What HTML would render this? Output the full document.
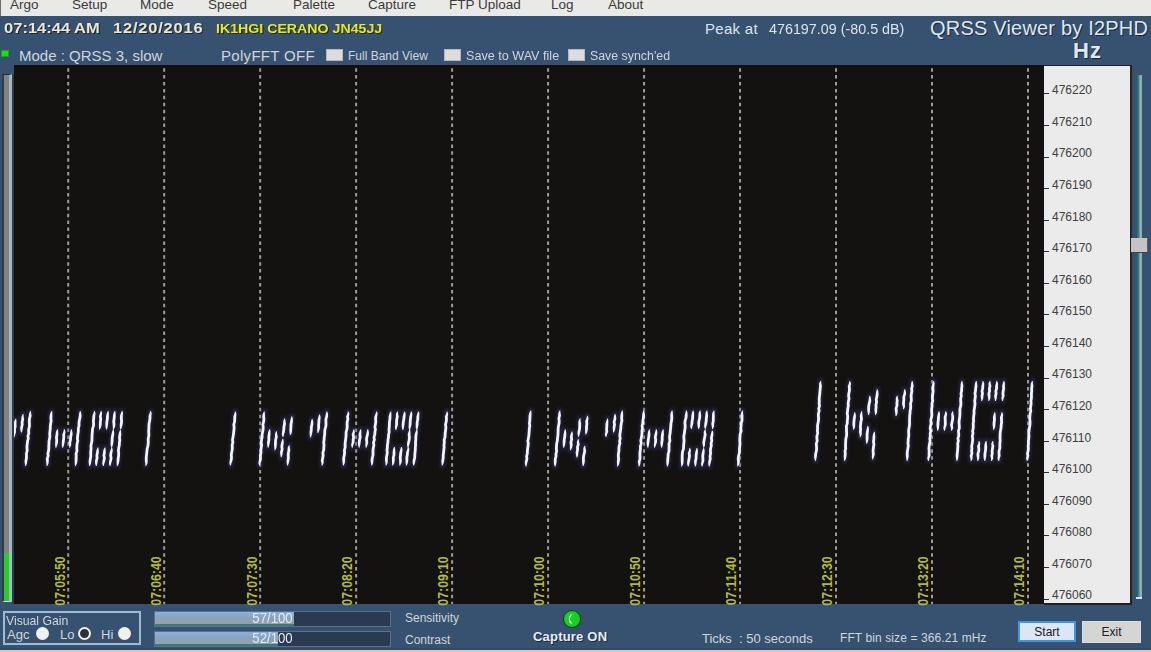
<!DOCTYPE html><html><head><meta charset="utf-8"><style>
*{margin:0;padding:0;box-sizing:border-box}
html,body{width:1151px;height:652px;overflow:hidden;background:#365270;font-family:"Liberation Sans",sans-serif}
.a{position:absolute;white-space:nowrap}
#menu{position:absolute;left:0;top:0;width:1151px;height:16px;background:#e9e9e8;border-left:1px solid #707070}
#menu span{position:absolute;top:-3px;font-size:13.5px;color:#3a3a3a;line-height:16px}
.tl{position:absolute;top:574px;width:60px;height:14px;line-height:14px;font-size:14px;font-weight:bold;color:#b4bc34;transform:rotate(-90deg) scaleX(0.88);transform-origin:center;text-align:center}
.tk{position:absolute;left:1043.5px;width:5.5px;height:1px;background:#303030}
.fq{position:absolute;left:1052px;font-size:12px;line-height:16px;color:#404040}
.cb{position:absolute;top:49px;width:17px;height:12px;background:#dcdcdc;border:1px solid #b8b8b8}
.wt{color:#e6e6e6}
</style></head><body>
<div id="menu">
<span style="left:9px">Argo</span><span style="left:71px">Setup</span><span style="left:139px">Mode</span><span style="left:207px">Speed</span><span style="left:292px">Palette</span><span style="left:367px">Capture</span><span style="left:448px">FTP Upload</span><span style="left:550px">Log</span><span style="left:607px">About</span>
</div>
<div class="a" style="left:4px;top:20px;font-size:14px;font-weight:bold;color:#ece6cc;text-shadow:1px 1px 0 #1c2838;transform:scaleX(1.18);transform-origin:left">07:14:44 AM</div>
<div class="a" style="left:113px;top:20px;font-size:14px;font-weight:bold;color:#ece6cc;text-shadow:1px 1px 0 #1c2838;letter-spacing:0.65px;transform:scaleX(1.18);transform-origin:left">12/20/2016</div>
<div class="a" style="left:216px;top:21px;font-size:13px;font-weight:bold;color:#e4ea22;text-shadow:1px 1px 0 #2a2a10;transform:scaleX(1.09);transform-origin:left">IK1HGI CERANO JN45JJ</div>
<div class="a wt" style="left:705px;top:19.5px;font-size:15px;color:#dde4ec;letter-spacing:0.3px">Peak at</div>
<div class="a wt" style="left:769px;top:19.5px;font-size:15px;color:#dde4ec;transform:scaleX(0.955);transform-origin:left">476197.09 (-80.5 dB)</div>
<div class="a" style="left:930px;top:17px;font-size:20px;letter-spacing:0.2px;color:#dfe8f0;text-shadow:1px 1px 0 #1c2838">QRSS Viewer by I2PHD</div>
<div class="a" style="left:1073px;top:38px;font-size:22px;font-weight:bold;letter-spacing:1px;color:#dfe8f0;text-shadow:1px 1px 0 #1c2838">Hz</div>
<div class="a" style="left:1px;top:50px;width:8px;height:7px;background:#18e018;border:1px solid #20a020"></div>
<div class="a wt" style="left:19px;top:47px;font-size:15px;color:#d0d5dc">Mode : QRSS 3, slow</div>
<div class="a wt" style="left:221px;top:47px;font-size:15px;color:#d0d5dc;letter-spacing:0.3px">PolyFFT OFF</div>
<div class="cb" style="left:326px"></div><div class="a wt" style="left:348px;top:48.5px;font-size:12px;color:#d0d5dc">Full Band View</div>
<div class="cb" style="left:444px"></div><div class="a wt" style="left:466px;top:48.5px;font-size:12px;color:#d0d5dc;transform:scaleX(1.05);transform-origin:left">Save to WAV file</div>
<div class="cb" style="left:568px"></div><div class="a wt" style="left:590px;top:48.5px;font-size:12px;color:#d0d5dc;transform:scaleX(1.03);transform-origin:left">Save synch'ed</div>

<!-- level meter -->
<div class="a" style="left:2px;top:74px;width:10px;height:528px;background:#85837f;border-top:1px solid #202830;border-left:2px solid #2e3e4c;border-right:3px solid #a4b8c6;border-bottom:1px solid #c8dce8"></div><div class="a" style="left:12px;top:74px;width:2px;height:530px;background:#2c3c4c"></div>
<div class="a" style="left:4px;top:553px;width:5px;height:48px;background:#1ed41e"></div>

<!-- waterfall -->
<div class="a" style="left:14px;top:65px;width:1030px;height:539px;background:#131211"></div>
<svg class="a" style="left:0;top:0" width="1151" height="652">
<defs><filter id="bl" x="-50%" y="-10%" width="200%" height="120%"><feGaussianBlur stdDeviation="1.6"/></filter><clipPath id="wc"><rect x="14" y="65" width="1030" height="539"/></clipPath></defs>
<g clip-path="url(#wc)">
<g stroke="#9c9c9c" stroke-dasharray="3.5 3.43" stroke-width="2"><line x1="68.20" y1="61.22" x2="68.20" y2="610"/><line x1="164.18" y1="61.22" x2="164.18" y2="610"/><line x1="260.16" y1="61.22" x2="260.16" y2="610"/><line x1="356.14" y1="61.22" x2="356.14" y2="610"/><line x1="452.12" y1="61.22" x2="452.12" y2="610"/><line x1="548.10" y1="61.22" x2="548.10" y2="610"/><line x1="644.08" y1="61.22" x2="644.08" y2="610"/><line x1="740.06" y1="61.22" x2="740.06" y2="610"/><line x1="836.04" y1="61.22" x2="836.04" y2="610"/><line x1="932.02" y1="61.22" x2="932.02" y2="610"/><line x1="1028.00" y1="61.22" x2="1028.00" y2="610"/></g>
<g fill="none" stroke="#4a4690" stroke-width="5" stroke-linecap="round" filter="url(#bl)" opacity="0.4"><polyline points="15.7,418.7 15.4,421.3 15.0,424.0 15.2,426.6 14.5,429.3 14.6,431.9 14.2,434.6 14.1,437.2"/><polyline points="23.1,414.1 22.6,416.8 22.7,419.4 22.1,422.1 22.2,424.7 21.6,427.4 21.4,430.0 21.5,432.6"/><polyline points="30.4,411.0 30.1,413.5 30.2,416.0 29.5,418.5 29.3,421.0 29.4,423.5 29.5,426.0 28.9,428.5 28.6,431.0 28.8,433.5 27.9,436.0 28.3,438.5 27.6,441.0 27.3,443.5 27.0,446.0 27.0,448.5 27.2,451.0 26.4,453.5 26.5,456.0 26.4,458.5 25.9,461.0 25.8,463.5 25.6,466.0"/><polyline points="51.8,411.0 51.2,413.5 51.0,416.0 50.9,418.5 51.1,421.0 50.7,423.5 50.3,426.0 50.3,428.5 50.0,431.0 49.7,433.5 49.9,436.0 49.6,438.5 49.0,441.0 49.0,443.5 48.8,446.0 48.8,448.5 48.5,451.0 47.9,453.5 48.2,456.0 47.3,458.5 47.4,461.0 47.4,463.5 47.0,466.0"/><polyline points="57.5,429.2 57.0,431.9 57.0,434.5 56.4,437.2 56.7,439.8 56.6,442.5 56.2,445.1 55.9,447.8"/><polyline points="64.3,429.2 64.4,431.9 63.7,434.5 63.8,437.2 63.5,439.8 63.2,442.5 62.9,445.1 62.7,447.8"/><polyline points="71.3,429.2 71.4,431.9 71.2,434.5 70.6,437.2 70.5,439.8 69.8,442.5 70.1,445.1 69.7,447.8"/><polyline points="80.2,411.0 80.1,413.5 80.2,416.0 79.8,418.5 79.2,421.0 79.0,423.5 79.0,426.0 78.3,428.5 78.4,431.0 78.0,433.5 77.7,436.0 77.4,438.5 77.8,441.0 77.1,443.5 76.9,446.0 76.8,448.5 77.0,451.0 76.1,453.5 76.2,456.0 76.1,458.5 76.1,461.0 75.9,463.5 75.4,466.0"/><polyline points="94.4,411.0 94.5,413.5 93.8,416.0 93.7,418.5 93.4,421.0 93.6,423.5 93.5,426.0 92.6,428.5 92.4,431.0 92.2,433.5 92.0,436.0 92.0,438.5 91.9,441.0 91.4,443.5 90.9,446.0 91.1,448.5 90.8,451.0 90.7,453.5 90.8,456.0 90.4,458.5 90.0,461.0 89.9,463.5 89.6,466.0"/><polyline points="101.1,411.0 101.0,413.6 100.3,416.3 100.7,418.9 100.4,421.6 100.3,424.2 100.0,426.9 99.5,429.5"/><polyline points="97.9,447.5 97.6,450.1 97.4,452.8 96.9,455.4 97.1,458.1 96.4,460.7 96.2,463.4 96.3,466.0"/><polyline points="108.2,411.0 107.7,413.6 107.5,416.3 107.4,418.9 106.9,421.6 106.7,424.2 106.5,426.9 106.6,429.5"/><polyline points="105.0,447.5 104.5,450.1 104.4,452.8 103.9,455.4 104.4,458.1 103.9,460.7 103.3,463.4 103.4,466.0"/><polyline points="114.9,411.0 114.5,413.6 114.3,416.3 114.1,418.9 113.7,421.6 114.0,424.2 113.9,426.9 113.3,429.5"/><polyline points="113.3,429.2 113.1,431.9 112.8,434.5 112.3,437.2 112.1,439.8 112.0,442.5 111.7,445.1 111.7,447.8"/><polyline points="111.7,447.5 111.7,450.1 111.0,452.8 110.6,455.4 111.1,458.1 110.6,460.7 110.0,463.4 110.1,466.0"/><polyline points="122.1,411.0 121.9,413.6 121.3,416.3 121.4,418.9 121.6,421.6 121.2,424.2 120.9,426.9 120.5,429.5"/><polyline points="120.5,429.9 120.0,432.5 119.9,435.0 119.5,437.6 119.8,440.2 119.4,442.8 119.3,445.4 118.7,447.9 118.4,450.5 118.7,453.1 118.6,455.7 118.2,458.3 118.0,460.8 117.8,463.4 117.3,466.0"/><polyline points="150.6,411.0 150.6,413.5 150.0,416.0 150.0,418.5 149.6,421.0 149.1,423.5 148.9,426.0 148.9,428.5 148.7,431.0 148.8,433.5 148.8,436.0 148.2,438.5 148.3,441.0 148.2,443.5 147.9,446.0 147.2,448.5 146.9,451.0 146.7,453.5 146.4,456.0 146.2,458.5 146.3,461.0 146.3,463.5 145.8,466.0"/><polyline points="235.3,411.5 235.4,414.1 234.8,416.6 234.7,419.2 234.6,421.8 233.8,424.4 234.1,426.9 234.0,429.5 233.7,432.1 233.4,434.6 233.0,437.2 232.5,439.8 232.8,442.4 232.2,444.9 232.3,447.5 232.2,450.1 231.6,452.6 231.3,455.2 231.5,457.8 231.1,460.4 230.5,462.9 230.5,465.5"/><polyline points="264.3,411.5 263.8,414.1 263.6,416.6 263.9,419.2 263.6,421.8 262.9,424.4 263.2,426.9 263.1,429.5 262.6,432.1 262.1,434.6 262.1,437.2 261.5,439.8 261.2,442.4 261.7,444.9 261.2,447.5 260.9,450.1 261.0,452.6 260.4,455.2 260.5,457.8 260.2,460.4 259.5,462.9 259.5,465.5"/><polyline points="269.7,429.2 269.3,431.9 269.1,434.5 268.8,437.2 268.9,439.8 268.4,442.5 268.2,445.1 268.1,447.8"/><polyline points="276.5,431.3 276.0,434.0 276.4,436.7 275.7,439.4 275.5,442.1 275.4,444.8 275.4,447.5 274.9,450.2"/><polyline points="284.7,418.6 284.4,421.3 284.5,423.9 284.0,426.5 283.8,429.2 283.5,431.8 282.9,434.5 283.0,437.1"/><polyline points="282.9,438.8 282.6,441.4 282.2,444.1 281.8,446.7 282.2,449.3 281.4,452.0 281.4,454.6 281.2,457.3"/><polyline points="291.9,416.2 291.8,418.9 291.5,421.6 291.0,424.3 290.9,427.0 290.7,429.7 290.7,432.4 290.2,435.1"/><polyline points="289.3,445.2 288.8,447.7 288.9,450.3 288.4,452.8 288.2,455.3 288.4,457.8 288.0,460.3 287.8,462.9 287.5,465.4"/><polyline points="312.2,418.9 312.1,421.5 312.0,424.2 311.4,426.8 311.3,429.5 311.0,432.1 310.7,434.7 310.5,437.4"/><polyline points="319.6,414.4 319.5,417.1 319.0,419.7 318.9,422.3 318.6,425.0 318.7,427.6 318.3,430.3 317.9,432.9"/><polyline points="326.8,411.5 326.9,414.1 326.7,416.6 325.9,419.2 325.9,421.8 326.0,424.4 325.7,426.9 324.9,429.5 324.7,432.1 324.7,434.6 324.2,437.2 324.1,439.8 323.7,442.4 324.0,444.9 323.8,447.5 323.7,450.1 322.9,452.6 323.1,455.2 322.8,457.8 322.2,460.4 322.5,462.9 322.0,465.5"/><polyline points="348.2,411.5 348.4,414.1 347.5,416.6 347.9,419.2 347.2,421.8 347.1,424.4 347.2,426.9 346.9,429.5 346.1,432.1 346.1,434.6 345.9,437.2 345.6,439.8 345.2,442.4 345.1,444.9 345.2,447.5 344.4,450.1 344.6,452.6 344.3,455.2 343.7,457.8 343.7,460.4 343.7,462.9 343.4,465.5"/><polyline points="353.9,429.2 353.7,431.9 353.1,434.5 353.6,437.2 353.2,439.8 353.1,442.5 352.2,445.1 352.3,447.8"/><polyline points="360.7,429.2 360.3,431.9 359.9,434.5 360.2,437.2 359.6,439.8 359.2,442.5 359.2,445.1 359.1,447.8"/><polyline points="367.7,429.2 367.8,431.9 367.5,434.5 366.8,437.2 366.5,439.8 366.9,442.5 366.4,445.1 366.1,447.8"/><polyline points="376.6,411.5 376.5,414.1 375.8,416.6 375.6,419.2 375.8,421.8 375.4,424.4 374.9,426.9 375.4,429.5 374.9,432.1 374.8,434.6 374.0,437.2 374.4,439.8 373.5,442.4 373.9,444.9 373.4,447.5 373.0,450.1 373.0,452.6 373.0,455.2 372.3,457.8 372.0,460.4 372.0,462.9 371.8,465.5"/><polyline points="390.8,411.5 390.4,414.1 390.0,416.6 389.9,419.2 389.5,421.8 389.4,424.4 389.3,426.9 389.0,429.5 389.2,432.1 388.6,434.6 388.5,437.2 388.0,439.8 387.9,442.4 387.4,444.9 387.4,447.5 387.0,450.1 387.3,452.6 386.9,455.2 386.4,457.8 386.4,460.4 386.6,462.9 386.0,465.5"/><polyline points="397.5,411.5 397.0,414.1 397.3,416.8 396.7,419.4 396.6,422.1 396.6,424.7 396.0,427.4 395.9,430.0"/><polyline points="394.3,447.0 394.1,449.6 394.0,452.3 394.0,454.9 393.3,457.6 393.4,460.2 393.1,462.9 392.7,465.5"/><polyline points="404.6,411.5 404.5,414.1 404.1,416.8 403.8,419.4 403.3,422.1 403.1,424.7 402.9,427.4 403.0,430.0"/><polyline points="401.4,447.0 401.4,449.6 400.8,452.3 400.5,454.9 400.2,457.6 400.5,460.2 400.3,462.9 399.8,465.5"/><polyline points="411.3,411.5 411.2,414.1 410.7,416.8 410.4,419.4 410.2,422.1 410.1,424.7 409.6,427.4 409.7,430.0"/><polyline points="409.7,429.2 409.4,431.9 409.1,434.5 409.4,437.2 409.2,439.8 408.6,442.5 408.1,445.1 408.1,447.8"/><polyline points="408.1,447.0 408.3,449.6 407.5,452.3 407.3,454.9 406.8,457.6 406.9,460.2 406.7,462.9 406.5,465.5"/><polyline points="418.5,411.5 418.3,414.1 417.8,416.8 417.8,419.4 417.2,422.1 417.1,424.7 416.8,427.4 416.9,430.0"/><polyline points="416.9,429.4 416.6,432.0 416.1,434.5 415.8,437.1 415.8,439.7 415.5,442.3 415.6,444.9 415.3,447.4 415.3,450.0 415.0,452.6 414.8,455.2 414.7,457.8 414.1,460.3 413.8,462.9 413.7,465.5"/><polyline points="447.0,411.5 447.2,414.1 446.3,416.6 446.5,419.2 446.2,421.8 445.5,424.4 445.9,426.9 445.7,429.5 445.3,432.1 445.1,434.6 445.0,437.2 444.2,439.8 444.3,442.4 444.0,444.9 444.1,447.5 443.8,450.1 443.6,452.6 443.2,455.2 443.2,457.8 442.8,460.4 442.6,462.9 442.2,465.5"/><polyline points="530.8,410.5 530.4,413.0 530.0,415.6 529.9,418.1 529.8,420.7 529.4,423.2 529.8,425.8 529.4,428.3 529.2,430.9 529.0,433.4 528.8,436.0 528.4,438.5 527.8,441.0 528.3,443.6 528.0,446.1 527.6,448.7 527.4,451.2 527.3,453.8 526.6,456.3 526.9,458.9 526.3,461.4 526.0,464.0 526.1,466.5"/><polyline points="559.8,410.5 559.4,413.0 559.6,415.6 558.9,418.1 559.1,420.7 559.1,423.2 558.5,425.8 558.2,428.3 558.1,430.9 558.0,433.4 557.9,436.0 557.5,438.5 557.3,441.0 556.7,443.6 556.5,446.1 556.4,448.7 556.6,451.2 556.0,453.8 556.0,456.3 555.3,458.9 555.2,461.4 555.1,464.0 555.1,466.5"/><polyline points="565.2,429.2 565.1,431.9 564.9,434.5 564.7,437.2 564.2,439.8 564.1,442.5 563.9,445.1 563.7,447.8"/><polyline points="572.1,431.4 571.8,434.1 571.3,436.8 571.7,439.5 570.9,442.2 571.3,444.9 571.0,447.6 570.5,450.3"/><polyline points="580.2,418.2 579.6,420.9 579.7,423.5 579.7,426.2 579.6,428.8 579.0,431.4 578.6,434.1 578.6,436.7"/><polyline points="578.4,439.1 577.9,441.8 578.3,444.4 577.5,447.0 577.6,449.7 577.0,452.3 577.1,455.0 576.8,457.6"/><polyline points="587.4,415.7 587.5,418.4 586.6,421.1 586.9,423.8 586.5,426.5 586.5,429.2 586.2,431.9 585.8,434.6"/><polyline points="584.8,445.8 584.4,448.3 584.7,450.9 584.2,453.4 583.6,455.9 583.4,458.4 583.5,460.9 583.3,463.5 583.1,466.0"/><polyline points="607.6,418.5 607.3,421.2 606.9,423.8 606.8,426.4 606.6,429.1 606.8,431.7 605.9,434.4 606.1,437.0"/><polyline points="615.0,413.9 615.0,416.5 614.9,419.2 614.1,421.8 614.5,424.5 614.1,427.1 614.0,429.7 613.5,432.4"/><polyline points="622.3,410.5 621.9,413.0 621.8,415.6 621.6,418.1 621.9,420.7 621.3,423.2 620.9,425.8 620.8,428.3 620.4,430.9 620.0,433.4 619.8,436.0 620.2,438.5 619.6,441.0 619.9,443.6 619.1,446.1 618.9,448.7 618.9,451.2 618.4,453.8 618.3,456.3 618.6,458.9 618.3,461.4 618.0,464.0 617.6,466.5"/><polyline points="643.7,410.5 643.6,413.0 643.6,415.6 643.4,418.1 642.9,420.7 642.8,423.2 642.1,425.8 642.4,428.3 642.0,430.9 642.0,433.4 641.7,436.0 641.2,438.5 640.8,441.0 641.3,443.6 640.4,446.1 640.5,448.7 640.1,451.2 639.9,453.8 640.0,456.3 640.0,458.9 639.2,461.4 639.3,464.0 639.0,466.5"/><polyline points="649.4,429.2 649.0,431.9 649.0,434.5 648.7,437.2 648.3,439.8 648.0,442.5 647.9,445.1 647.9,447.8"/><polyline points="656.2,429.2 656.3,431.9 655.8,434.5 655.3,437.2 655.7,439.8 655.5,442.5 654.9,445.1 654.7,447.8"/><polyline points="663.2,429.2 662.7,431.9 662.5,434.5 662.2,437.2 662.2,439.8 661.8,442.5 661.7,445.1 661.7,447.8"/><polyline points="672.1,410.5 671.7,413.0 671.7,415.6 671.8,418.1 671.5,420.7 671.0,423.2 670.8,425.8 670.6,428.3 670.3,430.9 670.1,433.4 669.6,436.0 669.6,438.5 669.9,441.0 669.0,443.6 669.1,446.1 669.0,448.7 669.0,451.2 668.2,453.8 668.1,456.3 667.8,458.9 667.7,461.4 667.6,464.0 667.4,466.5"/><polyline points="686.3,410.5 686.5,413.0 686.2,415.6 686.0,418.1 685.1,420.7 684.9,423.2 685.2,425.8 685.1,428.3 684.6,430.9 684.4,433.4 683.8,436.0 683.9,438.5 684.1,441.0 683.8,443.6 683.6,446.1 683.5,448.7 682.7,451.2 682.3,453.8 682.2,456.3 682.2,458.9 682.2,461.4 682.2,464.0 681.6,466.5"/><polyline points="693.0,410.5 693.0,413.1 692.7,415.8 692.6,418.4 692.1,421.1 691.9,423.7 691.3,426.4 691.5,429.0"/><polyline points="689.8,448.0 689.8,450.6 689.2,453.3 689.5,455.9 689.1,458.6 688.6,461.2 688.2,463.9 688.3,466.5"/><polyline points="700.1,410.5 699.7,413.1 699.8,415.8 699.6,418.4 698.9,421.1 698.7,423.7 698.8,426.4 698.6,429.0"/><polyline points="696.9,448.0 696.8,450.6 696.4,453.3 696.1,455.9 696.1,458.6 695.4,461.2 695.4,463.9 695.4,466.5"/><polyline points="706.8,410.5 706.6,413.1 706.7,415.8 706.3,418.4 706.2,421.1 705.7,423.7 705.3,426.4 705.3,429.0"/><polyline points="705.2,429.2 704.8,431.9 705.2,434.5 704.7,437.2 704.2,439.8 703.7,442.5 703.9,445.1 703.7,447.8"/><polyline points="703.6,448.0 703.6,450.6 703.1,453.3 702.8,455.9 702.9,458.6 702.9,461.2 702.1,463.9 702.1,466.5"/><polyline points="714.0,410.5 713.4,413.1 713.4,415.8 713.3,418.4 713.3,421.1 712.7,423.7 712.9,426.4 712.5,429.0"/><polyline points="712.3,430.4 712.3,433.0 711.9,435.5 711.4,438.1 711.8,440.7 711.1,443.3 711.3,445.9 710.6,448.4 710.4,451.0 710.6,453.6 710.0,456.2 710.3,458.8 709.7,461.3 709.3,463.9 709.3,466.5"/><polyline points="742.5,410.5 742.1,413.0 742.0,415.6 742.0,418.1 742.0,420.7 741.2,423.2 741.1,425.8 740.8,428.3 741.2,430.9 740.3,433.4 740.0,436.0 739.8,438.5 739.8,441.0 740.0,443.6 739.8,446.1 739.5,448.7 739.5,451.2 739.2,453.8 738.5,456.3 738.2,458.9 738.6,461.4 738.2,464.0 737.8,466.5"/><polyline points="820.7,381.0 820.2,383.5 820.5,386.0 820.2,388.5 820.0,391.0 819.8,393.5 819.5,396.0 819.2,398.5 819.3,401.0 819.2,403.5 819.5,406.0 818.7,408.5 819.2,411.0 818.4,413.5 818.4,416.0 818.6,418.5 818.4,421.0 817.9,423.5 817.5,426.0 817.6,428.5 817.4,431.0 817.7,433.5 816.9,436.0 816.9,438.5 817.2,441.0 816.3,443.5 816.5,446.0 816.6,448.5 816.4,451.0 815.7,453.5 815.5,456.0 815.4,458.5 815.6,461.0"/><polyline points="849.7,381.0 849.9,383.5 849.2,386.0 849.4,388.5 849.4,391.0 848.8,393.5 848.6,396.0 849.0,398.5 848.5,401.0 848.1,403.5 848.3,406.0 847.8,408.5 847.6,411.0 847.2,413.5 847.7,416.0 847.6,418.5 847.3,421.0 847.3,423.5 846.4,426.0 846.5,428.5 846.5,431.0 846.7,433.5 846.5,436.0 845.9,438.5 845.7,441.0 845.6,443.5 845.5,446.0 845.7,448.5 845.0,451.0 845.3,453.5 845.1,456.0 845.0,458.5 844.6,461.0"/><polyline points="854.7,412.2 854.8,414.7 854.5,417.2 854.1,419.7 853.9,422.3 853.8,424.8 854.0,427.3 853.6,429.8"/><polyline points="861.8,411.3 861.3,413.9 861.2,416.5 861.5,419.1 860.9,421.7 860.6,424.3 860.4,426.9 860.6,429.5 860.3,432.0 860.7,434.6 860.1,437.2"/><polyline points="869.8,395.8 869.9,398.5 869.8,401.3 869.1,404.0 868.7,406.8 868.6,409.6 868.7,412.3 868.5,415.1"/><polyline points="867.8,426.1 867.8,428.6 867.5,431.2 867.1,433.7 867.1,436.2 867.1,438.7 867.0,441.3 866.7,443.8"/><polyline points="877.2,389.2 877.2,391.8 877.1,394.4 876.8,397.0 876.2,399.6 876.6,402.1 876.0,404.7 876.1,407.3 875.8,409.9 875.9,412.5 875.5,415.1"/><polyline points="874.4,431.8 874.0,434.3 873.9,436.8 873.8,439.3 873.5,441.8 873.9,444.3 873.5,446.9 873.2,449.4 873.1,451.9 873.4,454.4 872.8,456.9 872.7,459.4"/><polyline points="897.3,395.8 896.9,398.3 897.2,400.8 896.9,403.3 897.0,405.8 896.1,408.3 896.3,410.9 896.4,413.4 896.0,415.9"/><polyline points="904.7,389.2 904.8,391.7 904.7,394.2 903.8,396.8 903.9,399.3 903.6,401.8 903.5,404.3 903.9,406.8 903.4,409.3"/><polyline points="912.2,381.0 912.1,383.5 912.3,386.0 911.6,388.5 911.9,391.0 911.4,393.5 911.1,396.0 911.3,398.5 911.3,401.0 910.5,403.5 910.7,406.0 910.6,408.5 910.1,411.0 910.0,413.5 909.7,416.0 909.6,418.5 909.5,421.0 909.6,423.5 909.4,426.0 908.9,428.5 908.6,431.0 908.7,433.5 908.8,436.0 908.3,438.5 908.2,441.0 908.0,443.5 908.3,446.0 907.9,448.5 907.4,451.0 907.2,453.5 907.3,456.0 907.3,458.5 907.1,461.0"/><polyline points="933.6,381.0 933.6,383.5 933.0,386.0 932.9,388.5 933.1,391.0 932.8,393.5 932.5,396.0 932.4,398.5 932.7,401.0 932.0,403.5 932.1,406.0 931.7,408.5 931.6,411.0 931.8,413.5 931.8,416.0 931.1,418.5 930.8,421.0 931.1,423.5 930.5,426.0 930.2,428.5 930.7,431.0 930.2,433.5 930.3,436.0 929.8,438.5 930.1,441.0 929.6,443.5 929.2,446.0 928.9,448.5 929.2,451.0 929.1,453.5 929.1,456.0 928.3,458.5 928.5,461.0"/><polyline points="939.0,411.3 938.9,414.1 938.5,416.9 938.4,419.6 938.0,422.4 937.9,425.1 937.9,427.9 937.7,430.7"/><polyline points="945.8,411.3 945.9,414.1 945.1,416.9 945.2,419.6 945.3,422.4 945.3,425.1 944.5,427.9 944.5,430.7"/><polyline points="952.8,411.3 952.3,414.1 952.8,416.9 952.6,419.6 952.0,422.4 951.5,425.1 952.0,427.9 951.5,430.7"/><polyline points="962.0,381.0 961.8,383.5 962.0,386.0 961.6,388.5 961.6,391.0 961.0,393.5 961.3,396.0 960.7,398.5 960.7,401.0 960.9,403.5 960.7,406.0 960.0,408.5 959.9,411.0 959.9,413.5 959.8,416.0 959.5,418.5 959.1,421.0 959.1,423.5 959.3,426.0 959.3,428.5 958.4,431.0 958.7,433.5 958.7,436.0 957.9,438.5 958.4,441.0 957.7,443.5 957.9,446.0 957.7,448.5 957.6,451.0 957.2,453.5 957.1,456.0 957.1,458.5 956.9,461.0"/><polyline points="976.2,381.0 976.0,383.5 976.0,386.0 975.7,388.5 975.5,391.0 975.0,393.5 975.4,396.0 975.1,398.5 974.7,401.0 975.0,403.5 974.8,406.0 974.4,408.5 974.0,411.0 974.1,413.5 973.7,416.0 973.5,418.5 973.6,421.0 973.2,423.5 973.3,426.0 973.2,428.5 972.6,431.0 973.0,433.5 972.3,436.0 972.7,438.5 972.6,441.0 972.2,443.5 971.7,446.0 971.9,448.5 971.6,451.0 971.9,453.5 971.1,456.0 971.5,458.5 971.1,461.0"/><polyline points="982.9,381.0 983.2,383.5 982.8,386.0 982.7,388.6 982.0,391.1 982.5,393.6 982.0,396.1 982.2,398.6 981.6,401.1"/><polyline points="979.1,440.9 979.2,443.4 978.5,445.9 978.8,448.4 978.8,450.9 977.9,453.4 978.0,456.0 978.1,458.5 977.8,461.0"/><polyline points="990.0,381.0 989.6,383.5 990.0,386.0 989.4,388.6 989.6,391.1 988.9,393.6 989.1,396.1 989.2,398.6 988.7,401.1"/><polyline points="986.2,440.9 985.8,443.4 985.7,445.9 985.7,448.4 985.4,450.9 985.0,453.4 984.9,456.0 984.8,458.5 984.9,461.0"/><polyline points="996.7,381.0 996.9,383.5 996.6,386.0 996.6,388.6 995.8,391.1 996.1,393.6 995.5,396.1 995.6,398.6 995.4,401.1"/><polyline points="994.7,412.2 994.7,414.7 994.3,417.2 994.5,419.7 994.1,422.3 994.0,424.8 994.0,427.3 993.6,429.8"/><polyline points="992.9,440.9 992.4,443.4 992.9,445.9 992.5,448.4 992.1,450.9 992.3,453.4 991.7,456.0 992.1,458.5 991.6,461.0"/><polyline points="1003.9,381.0 1003.8,383.5 1003.5,386.0 1003.7,388.6 1003.2,391.1 1002.9,393.6 1003.2,396.1 1002.4,398.6 1002.6,401.1"/><polyline points="1001.9,412.2 1002.0,414.7 1001.4,417.3 1001.5,419.9 1001.6,422.4 1001.2,425.0 1001.1,427.6 1000.6,430.2 1000.2,432.7 1000.1,435.3 1000.0,437.9 1000.2,440.4 999.9,443.0 999.8,445.6 999.9,448.1 999.1,450.7 999.0,453.3 999.2,455.9 998.5,458.4 998.8,461.0"/><polyline points="1032.4,381.0 1031.9,383.5 1032.0,386.0 1031.6,388.5 1031.7,391.0 1031.4,393.5 1031.5,396.0 1031.4,398.5 1030.9,401.0 1031.1,403.5 1030.8,406.0 1030.4,408.5 1030.8,411.0 1030.1,413.5 1029.9,416.0 1029.7,418.5 1030.0,421.0 1030.0,423.5 1029.8,426.0 1029.3,428.5 1029.0,431.0 1028.7,433.5 1029.0,436.0 1028.8,438.5 1028.4,441.0 1028.5,443.5 1028.2,446.0 1028.4,448.5 1028.1,451.0 1027.5,453.5 1027.9,456.0 1027.1,458.5 1027.3,461.0"/></g>
<g fill="#f4f4fc" stroke="none"><polygon points="15.4,418.7 14.3,421.3 13.6,424.0 13.8,426.6 13.1,429.3 13.2,431.9 13.1,434.6 13.8,437.2 14.5,437.2 15.3,434.6 16.0,431.9 15.9,429.3 16.6,426.6 16.4,424.0 16.5,421.3 16.1,418.7"/><polygon points="22.8,414.1 21.5,416.8 21.3,419.4 20.7,422.1 20.8,424.7 20.2,427.4 20.3,430.0 21.2,432.6 21.9,432.6 22.5,430.0 23.0,427.4 23.6,424.7 23.5,422.1 24.1,419.4 23.6,416.8 23.5,414.1"/><polygon points="30.1,411.0 29.1,413.5 28.8,416.0 28.1,418.5 27.9,421.0 28.0,423.5 28.1,426.0 27.5,428.5 27.2,431.0 27.4,433.5 26.5,436.0 26.9,438.5 26.2,441.0 25.9,443.5 25.6,446.0 25.6,448.5 25.8,451.0 25.0,453.5 25.1,456.0 25.0,458.5 24.5,461.0 24.8,463.5 25.2,466.0 25.9,466.0 26.9,463.5 27.3,461.0 27.8,458.5 27.9,456.0 27.8,453.5 28.6,451.0 28.4,448.5 28.4,446.0 28.7,443.5 29.0,441.0 29.7,438.5 29.3,436.0 30.2,433.5 30.0,431.0 30.3,428.5 30.9,426.0 30.8,423.5 30.7,421.0 30.9,418.5 31.6,416.0 31.2,413.5 30.8,411.0"/><polygon points="51.5,411.0 50.2,413.5 49.6,416.0 49.5,418.5 49.7,421.0 49.3,423.5 48.9,426.0 48.9,428.5 48.6,431.0 48.3,433.5 48.5,436.0 48.2,438.5 47.6,441.0 47.6,443.5 47.4,446.0 47.4,448.5 47.1,451.0 46.5,453.5 46.8,456.0 45.9,458.5 46.0,461.0 46.4,463.5 46.6,466.0 47.3,466.0 48.5,463.5 48.8,461.0 48.7,458.5 49.6,456.0 49.3,453.5 49.9,451.0 50.2,448.5 50.2,446.0 50.4,443.5 50.4,441.0 51.0,438.5 51.3,436.0 51.1,433.5 51.4,431.0 51.7,428.5 51.7,426.0 52.1,423.5 52.5,421.0 52.3,418.5 52.4,416.0 52.3,413.5 52.2,411.0"/><polygon points="57.2,429.2 55.9,431.9 55.6,434.5 55.0,437.2 55.3,439.8 55.2,442.5 55.1,445.1 55.5,447.8 56.2,447.8 57.3,445.1 58.0,442.5 58.1,439.8 57.8,437.2 58.4,434.5 58.1,431.9 57.9,429.2"/><polygon points="64.0,429.2 63.3,431.9 62.3,434.5 62.4,437.2 62.1,439.8 61.8,442.5 61.8,445.1 62.3,447.8 63.0,447.8 64.0,445.1 64.6,442.5 64.9,439.8 65.2,437.2 65.1,434.5 65.5,431.9 64.7,429.2"/><polygon points="71.0,429.2 70.3,431.9 69.8,434.5 69.2,437.2 69.1,439.8 68.4,442.5 69.0,445.1 69.3,447.8 70.0,447.8 71.2,445.1 71.2,442.5 71.9,439.8 72.0,437.2 72.6,434.5 72.4,431.9 71.7,429.2"/><polygon points="79.9,411.0 79.1,413.5 78.8,416.0 78.4,418.5 77.8,421.0 77.6,423.5 77.6,426.0 76.9,428.5 77.0,431.0 76.6,433.5 76.3,436.0 76.0,438.5 76.4,441.0 75.7,443.5 75.5,446.0 75.4,448.5 75.6,451.0 74.7,453.5 74.8,456.0 74.7,458.5 74.7,461.0 74.8,463.5 75.0,466.0 75.7,466.0 76.9,463.5 77.5,461.0 77.5,458.5 77.6,456.0 77.5,453.5 78.4,451.0 78.2,448.5 78.3,446.0 78.5,443.5 79.2,441.0 78.8,438.5 79.1,436.0 79.4,433.5 79.8,431.0 79.7,428.5 80.4,426.0 80.4,423.5 80.6,421.0 81.2,418.5 81.6,416.0 81.2,413.5 80.6,411.0"/><polygon points="94.1,411.0 93.4,413.5 92.4,416.0 92.3,418.5 92.0,421.0 92.2,423.5 92.1,426.0 91.2,428.5 91.0,431.0 90.8,433.5 90.6,436.0 90.6,438.5 90.5,441.0 90.0,443.5 89.5,446.0 89.7,448.5 89.4,451.0 89.3,453.5 89.4,456.0 89.0,458.5 88.6,461.0 88.8,463.5 89.2,466.0 89.9,466.0 91.0,463.5 91.4,461.0 91.8,458.5 92.2,456.0 92.1,453.5 92.2,451.0 92.5,448.5 92.3,446.0 92.8,443.5 93.3,441.0 93.4,438.5 93.4,436.0 93.6,433.5 93.8,431.0 94.0,428.5 94.9,426.0 95.0,423.5 94.8,421.0 95.1,418.5 95.2,416.0 95.5,413.5 94.8,411.0"/><polygon points="100.8,411.0 99.9,413.6 98.9,416.3 99.3,418.9 99.0,421.6 98.9,424.2 98.9,426.9 99.1,429.5 99.8,429.5 101.1,426.9 101.7,424.2 101.8,421.6 102.1,418.9 101.7,416.3 102.1,413.6 101.5,411.0"/><polygon points="97.6,447.5 96.5,450.1 96.0,452.8 95.5,455.4 95.7,458.1 95.0,460.7 95.1,463.4 95.9,466.0 96.6,466.0 97.3,463.4 97.8,460.7 98.5,458.1 98.3,455.4 98.8,452.8 98.7,450.1 98.3,447.5"/><polygon points="107.9,411.0 106.7,413.6 106.1,416.3 106.0,418.9 105.5,421.6 105.3,424.2 105.5,426.9 106.2,429.5 106.9,429.5 107.6,426.9 108.1,424.2 108.3,421.6 108.8,418.9 108.9,416.3 108.8,413.6 108.6,411.0"/><polygon points="104.7,447.5 103.4,450.1 103.0,452.8 102.5,455.4 103.0,458.1 102.5,460.7 102.2,463.4 103.0,466.0 103.7,466.0 104.4,463.4 105.3,460.7 105.8,458.1 105.3,455.4 105.8,452.8 105.6,450.1 105.4,447.5"/><polygon points="114.6,411.0 113.4,413.6 112.9,416.3 112.7,418.9 112.3,421.6 112.6,424.2 112.8,426.9 112.9,429.5 113.6,429.5 115.0,426.9 115.4,424.2 115.1,421.6 115.5,418.9 115.7,416.3 115.6,413.6 115.3,411.0"/><polygon points="113.0,429.2 112.0,431.9 111.4,434.5 110.9,437.2 110.7,439.8 110.6,442.5 110.6,445.1 111.3,447.8 112.0,447.8 112.8,445.1 113.4,442.5 113.5,439.8 113.7,437.2 114.2,434.5 114.1,431.9 113.7,429.2"/><polygon points="111.4,447.5 110.6,450.1 109.6,452.8 109.2,455.4 109.7,458.1 109.2,460.7 108.9,463.4 109.7,466.0 110.4,466.0 111.1,463.4 112.0,460.7 112.5,458.1 112.0,455.4 112.4,452.8 112.8,450.1 112.1,447.5"/><polygon points="121.8,411.0 120.8,413.6 119.9,416.3 120.0,418.9 120.2,421.6 119.8,424.2 119.8,426.9 120.1,429.5 120.8,429.5 122.0,426.9 122.6,424.2 123.0,421.6 122.8,418.9 122.7,416.3 123.0,413.6 122.5,411.0"/><polygon points="120.1,429.9 119.0,432.5 118.5,435.0 118.1,437.6 118.4,440.2 118.0,442.8 117.9,445.4 117.3,447.9 117.0,450.5 117.3,453.1 117.2,455.7 116.8,458.3 116.6,460.8 116.7,463.4 116.9,466.0 117.6,466.0 118.8,463.4 119.4,460.8 119.6,458.3 120.0,455.7 120.1,453.1 119.8,450.5 120.1,447.9 120.7,445.4 120.8,442.8 121.2,440.2 120.9,437.6 121.3,435.0 121.1,432.5 120.8,429.9"/><polygon points="150.3,411.0 149.5,413.5 148.6,416.0 148.6,418.5 148.2,421.0 147.7,423.5 147.5,426.0 147.5,428.5 147.3,431.0 147.4,433.5 147.4,436.0 146.8,438.5 146.9,441.0 146.8,443.5 146.5,446.0 145.8,448.5 145.5,451.0 145.3,453.5 145.0,456.0 144.8,458.5 144.9,461.0 145.3,463.5 145.4,466.0 146.1,466.0 147.4,463.5 147.7,461.0 147.6,458.5 147.8,456.0 148.1,453.5 148.3,451.0 148.6,448.5 149.3,446.0 149.6,443.5 149.7,441.0 149.6,438.5 150.2,436.0 150.2,433.5 150.1,431.0 150.3,428.5 150.3,426.0 150.5,423.5 151.0,421.0 151.4,418.5 151.4,416.0 151.6,413.5 151.0,411.0"/><polygon points="235.0,411.5 234.3,414.1 233.4,416.6 233.3,419.2 233.2,421.8 232.4,424.4 232.7,426.9 232.6,429.5 232.3,432.1 232.0,434.6 231.6,437.2 231.1,439.8 231.4,442.4 230.8,444.9 230.9,447.5 230.8,450.1 230.2,452.6 229.9,455.2 230.1,457.8 229.7,460.4 229.4,462.9 230.1,465.5 230.8,465.5 231.5,462.9 232.5,460.4 232.9,457.8 232.7,455.2 233.0,452.6 233.6,450.1 233.7,447.5 233.6,444.9 234.2,442.4 233.9,439.8 234.4,437.2 234.8,434.6 235.1,432.1 235.4,429.5 235.5,426.9 235.2,424.4 236.0,421.8 236.1,419.2 236.2,416.6 236.4,414.1 235.7,411.5"/><polygon points="264.0,411.5 262.7,414.1 262.2,416.6 262.5,419.2 262.2,421.8 261.5,424.4 261.8,426.9 261.7,429.5 261.2,432.1 260.7,434.6 260.7,437.2 260.1,439.8 259.8,442.4 260.3,444.9 259.8,447.5 259.5,450.1 259.6,452.6 259.0,455.2 259.1,457.8 258.8,460.4 258.4,462.9 259.1,465.5 259.8,465.5 260.6,462.9 261.6,460.4 261.9,457.8 261.8,455.2 262.4,452.6 262.3,450.1 262.6,447.5 263.1,444.9 262.6,442.4 262.9,439.8 263.5,437.2 263.5,434.6 264.0,432.1 264.5,429.5 264.6,426.9 264.3,424.4 265.0,421.8 265.3,419.2 265.0,416.6 264.9,414.1 264.7,411.5"/><polygon points="269.4,429.2 268.2,431.9 267.7,434.5 267.4,437.2 267.5,439.8 267.0,442.5 267.2,445.1 267.7,447.8 268.4,447.8 269.3,445.1 269.8,442.5 270.3,439.8 270.2,437.2 270.5,434.5 270.4,431.9 270.1,429.2"/><polygon points="276.2,431.3 274.9,434.0 275.0,436.7 274.3,439.4 274.1,442.1 274.0,444.8 274.3,447.5 274.5,450.2 275.2,450.2 276.5,447.5 276.8,444.8 276.9,442.1 277.1,439.4 277.8,436.7 277.1,434.0 276.9,431.3"/><polygon points="284.3,418.6 283.3,421.3 283.1,423.9 282.6,426.5 282.4,429.2 282.1,431.8 281.8,434.5 282.7,437.1 283.4,437.1 284.0,434.5 284.9,431.8 285.2,429.2 285.4,426.5 285.9,423.9 285.5,421.3 285.0,418.6"/><polygon points="282.5,438.8 281.5,441.4 280.8,444.1 280.4,446.7 280.8,449.3 280.0,452.0 280.3,454.6 280.9,457.3 281.6,457.3 282.5,454.6 282.8,452.0 283.6,449.3 283.2,446.7 283.6,444.1 283.7,441.4 283.2,438.8"/><polygon points="291.5,416.2 290.7,418.9 290.1,421.6 289.6,424.3 289.5,427.0 289.3,429.7 289.6,432.4 289.9,435.1 290.6,435.1 291.8,432.4 292.1,429.7 292.3,427.0 292.4,424.3 292.9,421.6 292.9,418.9 292.2,416.2"/><polygon points="288.9,445.2 287.7,447.7 287.5,450.3 287.0,452.8 286.8,455.3 287.0,457.8 286.6,460.3 286.7,462.9 287.2,465.4 287.9,465.4 288.8,462.9 289.4,460.3 289.8,457.8 289.6,455.3 289.8,452.8 290.3,450.3 289.8,447.7 289.6,445.2"/><polygon points="311.8,418.9 311.0,421.5 310.6,424.2 310.0,426.8 309.9,429.5 309.6,432.1 309.7,434.7 310.1,437.4 310.8,437.4 311.8,434.7 312.4,432.1 312.7,429.5 312.8,426.8 313.4,424.2 313.2,421.5 312.5,418.9"/><polygon points="319.2,414.4 318.4,417.1 317.6,419.7 317.5,422.3 317.2,425.0 317.3,427.6 317.2,430.3 317.5,432.9 318.2,432.9 319.4,430.3 320.1,427.6 320.0,425.0 320.3,422.3 320.4,419.7 320.6,417.1 319.9,414.4"/><polygon points="326.5,411.5 325.8,414.1 325.3,416.6 324.5,419.2 324.5,421.8 324.6,424.4 324.3,426.9 323.5,429.5 323.3,432.1 323.3,434.6 322.8,437.2 322.7,439.8 322.3,442.4 322.6,444.9 322.4,447.5 322.3,450.1 321.5,452.6 321.7,455.2 321.4,457.8 320.8,460.4 321.5,462.9 321.6,465.5 322.3,465.5 323.6,462.9 323.6,460.4 324.2,457.8 324.5,455.2 324.3,452.6 325.1,450.1 325.2,447.5 325.4,444.9 325.1,442.4 325.5,439.8 325.6,437.2 326.1,434.6 326.1,432.1 326.3,429.5 327.1,426.9 327.4,424.4 327.3,421.8 327.3,419.2 328.1,416.6 328.0,414.1 327.2,411.5"/><polygon points="347.9,411.5 347.3,414.1 346.1,416.6 346.5,419.2 345.8,421.8 345.7,424.4 345.8,426.9 345.5,429.5 344.7,432.1 344.7,434.6 344.5,437.2 344.2,439.8 343.8,442.4 343.7,444.9 343.8,447.5 343.0,450.1 343.2,452.6 342.9,455.2 342.3,457.8 342.3,460.4 342.6,462.9 343.0,465.5 343.7,465.5 344.8,462.9 345.1,460.4 345.1,457.8 345.7,455.2 346.0,452.6 345.8,450.1 346.6,447.5 346.5,444.9 346.6,442.4 347.0,439.8 347.3,437.2 347.5,434.6 347.5,432.1 348.3,429.5 348.6,426.9 348.5,424.4 348.6,421.8 349.3,419.2 348.9,416.6 349.4,414.1 348.6,411.5"/><polygon points="353.6,429.2 352.6,431.9 351.7,434.5 352.2,437.2 351.8,439.8 351.7,442.5 351.1,445.1 351.9,447.8 352.6,447.8 353.3,445.1 354.5,442.5 354.6,439.8 355.0,437.2 354.5,434.5 354.8,431.9 354.3,429.2"/><polygon points="360.4,429.2 359.2,431.9 358.5,434.5 358.8,437.2 358.2,439.8 357.8,442.5 358.2,445.1 358.7,447.8 359.4,447.8 360.3,445.1 360.6,442.5 361.0,439.8 361.6,437.2 361.3,434.5 361.4,431.9 361.1,429.2"/><polygon points="367.4,429.2 366.7,431.9 366.1,434.5 365.4,437.2 365.1,439.8 365.5,442.5 365.3,445.1 365.7,447.8 366.4,447.8 367.5,445.1 368.3,442.5 367.9,439.8 368.2,437.2 368.9,434.5 368.9,431.9 368.1,429.2"/><polygon points="376.3,411.5 375.5,414.1 374.4,416.6 374.2,419.2 374.4,421.8 374.0,424.4 373.5,426.9 374.0,429.5 373.5,432.1 373.4,434.6 372.6,437.2 373.0,439.8 372.1,442.4 372.5,444.9 372.0,447.5 371.6,450.1 371.6,452.6 371.6,455.2 370.9,457.8 370.6,460.4 371.0,462.9 371.4,465.5 372.1,465.5 373.1,462.9 373.4,460.4 373.7,457.8 374.4,455.2 374.4,452.6 374.4,450.1 374.8,447.5 375.3,444.9 374.9,442.4 375.8,439.8 375.4,437.2 376.2,434.6 376.3,432.1 376.8,429.5 376.3,426.9 376.8,424.4 377.2,421.8 377.0,419.2 377.2,416.6 377.6,414.1 377.0,411.5"/><polygon points="390.5,411.5 389.3,414.1 388.6,416.6 388.5,419.2 388.1,421.8 388.0,424.4 387.9,426.9 387.6,429.5 387.8,432.1 387.2,434.6 387.1,437.2 386.6,439.8 386.5,442.4 386.0,444.9 386.0,447.5 385.6,450.1 385.9,452.6 385.5,455.2 385.0,457.8 385.0,460.4 385.5,462.9 385.6,465.5 386.3,465.5 387.6,462.9 387.8,460.4 387.8,457.8 388.3,455.2 388.7,452.6 388.4,450.1 388.8,447.5 388.8,444.9 389.3,442.4 389.4,439.8 389.9,437.2 390.0,434.6 390.6,432.1 390.4,429.5 390.7,426.9 390.8,424.4 390.9,421.8 391.3,419.2 391.4,416.6 391.4,414.1 391.2,411.5"/><polygon points="397.2,411.5 395.9,414.1 395.9,416.8 395.3,419.4 395.2,422.1 395.2,424.7 394.9,427.4 395.5,430.0 396.2,430.0 397.1,427.4 398.0,424.7 398.0,422.1 398.1,419.4 398.7,416.8 398.1,414.1 397.9,411.5"/><polygon points="394.0,447.0 393.0,449.6 392.6,452.3 392.6,454.9 391.9,457.6 392.0,460.2 392.0,462.9 392.3,465.5 393.0,465.5 394.2,462.9 394.8,460.2 394.7,457.6 395.4,454.9 395.4,452.3 395.2,449.6 394.7,447.0"/><polygon points="404.3,411.5 403.4,414.1 402.7,416.8 402.4,419.4 401.9,422.1 401.7,424.7 401.8,427.4 402.6,430.0 403.3,430.0 403.9,427.4 404.5,424.7 404.7,422.1 405.2,419.4 405.5,416.8 405.6,414.1 405.0,411.5"/><polygon points="401.1,447.0 400.3,449.6 399.4,452.3 399.1,454.9 398.8,457.6 399.1,460.2 399.2,462.9 399.4,465.5 400.1,465.5 401.4,462.9 401.9,460.2 401.6,457.6 401.9,454.9 402.2,452.3 402.5,449.6 401.8,447.0"/><polygon points="411.0,411.5 410.1,414.1 409.3,416.8 409.0,419.4 408.8,422.1 408.7,424.7 408.5,427.4 409.3,430.0 410.0,430.0 410.7,427.4 411.5,424.7 411.6,422.1 411.8,419.4 412.1,416.8 412.3,414.1 411.7,411.5"/><polygon points="409.4,429.2 408.4,431.9 407.7,434.5 408.0,437.2 407.8,439.8 407.2,442.5 407.0,445.1 407.7,447.8 408.4,447.8 409.2,445.1 410.0,442.5 410.6,439.8 410.8,437.2 410.5,434.5 410.5,431.9 410.1,429.2"/><polygon points="407.8,447.0 407.2,449.6 406.1,452.3 405.9,454.9 405.4,457.6 405.5,460.2 405.6,462.9 406.1,465.5 406.8,465.5 407.8,462.9 408.3,460.2 408.2,457.6 408.7,454.9 408.9,452.3 409.4,449.6 408.5,447.0"/><polygon points="418.2,411.5 417.2,414.1 416.4,416.8 416.4,419.4 415.8,422.1 415.7,424.7 415.7,427.4 416.5,430.0 417.2,430.0 417.9,427.4 418.5,424.7 418.6,422.1 419.2,419.4 419.2,416.8 419.4,414.1 418.9,411.5"/><polygon points="416.6,429.4 415.5,432.0 414.7,434.5 414.4,437.1 414.4,439.7 414.1,442.3 414.2,444.9 413.9,447.4 413.9,450.0 413.6,452.6 413.4,455.2 413.3,457.8 412.7,460.3 412.7,462.9 413.3,465.5 414.0,465.5 414.9,462.9 415.5,460.3 416.1,457.8 416.2,455.2 416.4,452.6 416.7,450.0 416.7,447.4 417.0,444.9 416.9,442.3 417.2,439.7 417.2,437.1 417.5,434.5 417.7,432.0 417.3,429.4"/><polygon points="446.7,411.5 446.1,414.1 444.9,416.6 445.1,419.2 444.8,421.8 444.1,424.4 444.5,426.9 444.3,429.5 443.9,432.1 443.7,434.6 443.6,437.2 442.8,439.8 442.9,442.4 442.6,444.9 442.7,447.5 442.4,450.1 442.2,452.6 441.8,455.2 441.8,457.8 441.4,460.4 441.5,462.9 441.8,465.5 442.5,465.5 443.6,462.9 444.2,460.4 444.6,457.8 444.6,455.2 445.0,452.6 445.2,450.1 445.5,447.5 445.4,444.9 445.7,442.4 445.6,439.8 446.4,437.2 446.5,434.6 446.7,432.1 447.1,429.5 447.3,426.9 446.9,424.4 447.6,421.8 447.9,419.2 447.7,416.6 448.2,414.1 447.4,411.5"/><polygon points="530.5,410.5 529.3,413.0 528.6,415.6 528.5,418.1 528.4,420.7 528.0,423.2 528.4,425.8 528.0,428.3 527.8,430.9 527.6,433.4 527.4,436.0 527.0,438.5 526.4,441.0 526.9,443.6 526.6,446.1 526.2,448.7 526.0,451.2 525.9,453.8 525.2,456.3 525.5,458.9 524.9,461.4 524.9,464.0 525.7,466.5 526.4,466.5 527.0,464.0 527.7,461.4 528.3,458.9 528.0,456.3 528.7,453.8 528.8,451.2 529.0,448.7 529.4,446.1 529.7,443.6 529.2,441.0 529.8,438.5 530.2,436.0 530.4,433.4 530.6,430.9 530.8,428.3 531.2,425.8 530.8,423.2 531.2,420.7 531.3,418.1 531.4,415.6 531.5,413.0 531.2,410.5"/><polygon points="559.5,410.5 558.3,413.0 558.2,415.6 557.5,418.1 557.7,420.7 557.7,423.2 557.1,425.8 556.8,428.3 556.7,430.9 556.6,433.4 556.5,436.0 556.1,438.5 555.9,441.0 555.3,443.6 555.1,446.1 555.0,448.7 555.2,451.2 554.6,453.8 554.6,456.3 553.9,458.9 553.8,461.4 554.0,464.0 554.7,466.5 555.4,466.5 556.2,464.0 556.6,461.4 556.7,458.9 557.4,456.3 557.4,453.8 558.0,451.2 557.8,448.7 557.9,446.1 558.1,443.6 558.7,441.0 558.9,438.5 559.3,436.0 559.4,433.4 559.5,430.9 559.6,428.3 559.9,425.8 560.5,423.2 560.5,420.7 560.3,418.1 561.0,415.6 560.5,413.0 560.2,410.5"/><polygon points="564.9,429.2 564.1,431.9 563.5,434.5 563.3,437.2 562.8,439.8 562.7,442.5 562.8,445.1 563.3,447.8 564.0,447.8 565.0,445.1 565.5,442.5 565.6,439.8 566.1,437.2 566.3,434.5 566.2,431.9 565.6,429.2"/><polygon points="571.7,431.4 570.7,434.1 569.9,436.8 570.3,439.5 569.5,442.2 569.9,444.9 569.9,447.6 570.1,450.3 570.8,450.3 572.1,447.6 572.7,444.9 572.3,442.2 573.1,439.5 572.7,436.8 572.9,434.1 572.4,431.4"/><polygon points="579.8,418.2 578.5,420.9 578.3,423.5 578.3,426.2 578.2,428.8 577.6,431.4 577.5,434.1 578.2,436.7 578.9,436.7 579.7,434.1 580.4,431.4 581.0,428.8 581.1,426.2 581.1,423.5 580.6,420.9 580.5,418.2"/><polygon points="578.0,439.1 576.9,441.8 576.9,444.4 576.1,447.0 576.2,449.7 575.6,452.3 576.0,455.0 576.5,457.6 577.2,457.6 578.2,455.0 578.4,452.3 579.0,449.7 578.9,447.0 579.7,444.4 579.0,441.8 578.7,439.1"/><polygon points="587.0,415.7 586.4,418.4 585.2,421.1 585.5,423.8 585.1,426.5 585.1,429.2 585.1,431.9 585.4,434.6 586.1,434.6 587.3,431.9 587.9,429.2 587.9,426.5 588.3,423.8 588.0,421.1 588.6,418.4 587.7,415.7"/><polygon points="584.5,445.8 583.3,448.3 583.3,450.9 582.8,453.4 582.2,455.9 582.0,458.4 582.1,460.9 582.2,463.5 582.8,466.0 583.5,466.0 584.4,463.5 584.9,460.9 584.8,458.4 585.0,455.9 585.6,453.4 586.1,450.9 585.5,448.3 585.2,445.8"/><polygon points="607.3,418.5 606.2,421.2 605.5,423.8 605.4,426.4 605.2,429.1 605.4,431.7 604.8,434.4 605.7,437.0 606.4,437.0 607.0,434.4 608.2,431.7 608.0,429.1 608.2,426.4 608.3,423.8 608.3,421.2 608.0,418.5"/><polygon points="614.7,413.9 613.9,416.5 613.5,419.2 612.7,421.8 613.1,424.5 612.7,427.1 612.9,429.7 613.1,432.4 613.8,432.4 615.1,429.7 615.5,427.1 615.9,424.5 615.5,421.8 616.3,419.2 616.1,416.5 615.4,413.9"/><polygon points="622.0,410.5 620.9,413.0 620.4,415.6 620.2,418.1 620.5,420.7 619.9,423.2 619.5,425.8 619.4,428.3 619.0,430.9 618.6,433.4 618.4,436.0 618.8,438.5 618.2,441.0 618.5,443.6 617.7,446.1 617.5,448.7 617.5,451.2 617.0,453.8 616.9,456.3 617.2,458.9 616.9,461.4 617.0,464.0 617.2,466.5 617.9,466.5 619.1,464.0 619.7,461.4 620.0,458.9 619.7,456.3 619.8,453.8 620.3,451.2 620.3,448.7 620.5,446.1 621.3,443.6 621.0,441.0 621.6,438.5 621.2,436.0 621.4,433.4 621.8,430.9 622.2,428.3 622.3,425.8 622.7,423.2 623.3,420.7 623.0,418.1 623.2,415.6 623.0,413.0 622.7,410.5"/><polygon points="643.4,410.5 642.5,413.0 642.2,415.6 642.0,418.1 641.5,420.7 641.4,423.2 640.7,425.8 641.0,428.3 640.6,430.9 640.6,433.4 640.3,436.0 639.8,438.5 639.4,441.0 639.9,443.6 639.0,446.1 639.1,448.7 638.7,451.2 638.5,453.8 638.6,456.3 638.6,458.9 637.8,461.4 638.3,464.0 638.6,466.5 639.3,466.5 640.4,464.0 640.6,461.4 641.4,458.9 641.4,456.3 641.3,453.8 641.5,451.2 641.9,448.7 641.8,446.1 642.7,443.6 642.2,441.0 642.6,438.5 643.1,436.0 643.4,433.4 643.4,430.9 643.8,428.3 643.5,425.8 644.2,423.2 644.3,420.7 644.8,418.1 645.0,415.6 644.7,413.0 644.1,410.5"/><polygon points="649.1,429.2 648.0,431.9 647.6,434.5 647.3,437.2 646.9,439.8 646.6,442.5 646.8,445.1 647.5,447.8 648.2,447.8 648.9,445.1 649.4,442.5 649.7,439.8 650.1,437.2 650.4,434.5 650.1,431.9 649.8,429.2"/><polygon points="655.9,429.2 655.2,431.9 654.4,434.5 653.9,437.2 654.3,439.8 654.1,442.5 653.8,445.1 654.3,447.8 655.0,447.8 655.9,445.1 656.9,442.5 657.1,439.8 656.7,437.2 657.2,434.5 657.4,431.9 656.6,429.2"/><polygon points="662.9,429.2 661.6,431.9 661.1,434.5 660.8,437.2 660.8,439.8 660.4,442.5 660.6,445.1 661.3,447.8 662.0,447.8 662.8,445.1 663.2,442.5 663.6,439.8 663.6,437.2 663.9,434.5 663.8,431.9 663.6,429.2"/><polygon points="671.8,410.5 670.6,413.0 670.3,415.6 670.4,418.1 670.1,420.7 669.6,423.2 669.4,425.8 669.2,428.3 668.9,430.9 668.7,433.4 668.2,436.0 668.2,438.5 668.5,441.0 667.6,443.6 667.7,446.1 667.6,448.7 667.6,451.2 666.8,453.8 666.7,456.3 666.4,458.9 666.3,461.4 666.5,464.0 667.0,466.5 667.7,466.5 668.6,464.0 669.1,461.4 669.2,458.9 669.5,456.3 669.6,453.8 670.4,451.2 670.4,448.7 670.5,446.1 670.4,443.6 671.3,441.0 671.0,438.5 671.0,436.0 671.5,433.4 671.7,430.9 672.0,428.3 672.2,425.8 672.4,423.2 672.9,420.7 673.2,418.1 673.1,415.6 672.8,413.0 672.5,410.5"/><polygon points="686.0,410.5 685.4,413.0 684.8,415.6 684.6,418.1 683.7,420.7 683.5,423.2 683.8,425.8 683.7,428.3 683.2,430.9 683.0,433.4 682.4,436.0 682.5,438.5 682.7,441.0 682.4,443.6 682.2,446.1 682.1,448.7 681.3,451.2 680.9,453.8 680.8,456.3 680.8,458.9 680.8,461.4 681.1,464.0 681.2,466.5 681.9,466.5 683.2,464.0 683.6,461.4 683.6,458.9 683.6,456.3 683.7,453.8 684.1,451.2 684.9,448.7 685.0,446.1 685.2,443.6 685.5,441.0 685.3,438.5 685.2,436.0 685.8,433.4 686.0,430.9 686.5,428.3 686.6,425.8 686.3,423.2 686.5,420.7 687.4,418.1 687.6,415.6 687.5,413.0 686.7,410.5"/><polygon points="692.7,410.5 691.9,413.1 691.3,415.8 691.2,418.4 690.7,421.1 690.5,423.7 690.2,426.4 691.1,429.0 691.8,429.0 692.4,426.4 693.3,423.7 693.5,421.1 694.0,418.4 694.1,415.8 694.1,413.1 693.4,410.5"/><polygon points="689.5,448.0 688.8,450.6 687.8,453.3 688.1,455.9 687.7,458.6 687.2,461.2 687.1,463.9 687.9,466.5 688.6,466.5 689.3,463.9 690.0,461.2 690.5,458.6 690.9,455.9 690.6,453.3 690.9,450.6 690.2,448.0"/><polygon points="699.8,410.5 698.6,413.1 698.4,415.8 698.2,418.4 697.5,421.1 697.3,423.7 697.7,426.4 698.2,429.0 698.9,429.0 699.9,426.4 700.1,423.7 700.3,421.1 701.0,418.4 701.2,415.8 700.8,413.1 700.5,410.5"/><polygon points="696.6,448.0 695.7,450.6 695.0,453.3 694.7,455.9 694.7,458.6 694.0,461.2 694.4,463.9 695.0,466.5 695.7,466.5 696.5,463.9 696.8,461.2 697.5,458.6 697.5,455.9 697.8,453.3 697.9,450.6 697.3,448.0"/><polygon points="706.5,410.5 705.5,413.1 705.3,415.8 704.9,418.4 704.8,421.1 704.3,423.7 704.2,426.4 704.9,429.0 705.6,429.0 706.4,426.4 707.1,423.7 707.6,421.1 707.7,418.4 708.1,415.8 707.7,413.1 707.2,410.5"/><polygon points="704.9,429.2 703.7,431.9 703.8,434.5 703.3,437.2 702.8,439.8 702.3,442.5 702.8,445.1 703.3,447.8 704.0,447.8 705.0,445.1 705.1,442.5 705.6,439.8 706.1,437.2 706.6,434.5 705.9,431.9 705.6,429.2"/><polygon points="703.3,448.0 702.5,450.6 701.7,453.3 701.4,455.9 701.5,458.6 701.5,461.2 701.0,463.9 701.7,466.5 702.4,466.5 703.2,463.9 704.3,461.2 704.3,458.6 704.2,455.9 704.5,453.3 704.7,450.6 704.0,448.0"/><polygon points="713.7,410.5 712.3,413.1 712.0,415.8 711.9,418.4 711.9,421.1 711.3,423.7 711.8,426.4 712.1,429.0 712.8,429.0 714.0,426.4 714.1,423.7 714.7,421.1 714.7,418.4 714.8,415.8 714.5,413.1 714.4,410.5"/><polygon points="712.0,430.4 711.2,433.0 710.5,435.5 710.0,438.1 710.4,440.7 709.7,443.3 709.9,445.9 709.2,448.4 709.0,451.0 709.2,453.6 708.6,456.2 708.9,458.8 708.3,461.3 708.2,463.9 708.9,466.5 709.6,466.5 710.3,463.9 711.1,461.3 711.7,458.8 711.4,456.2 712.0,453.6 711.8,451.0 712.0,448.4 712.7,445.9 712.5,443.3 713.2,440.7 712.8,438.1 713.3,435.5 713.4,433.0 712.7,430.4"/><polygon points="742.2,410.5 741.0,413.0 740.6,415.6 740.6,418.1 740.6,420.7 739.8,423.2 739.7,425.8 739.4,428.3 739.8,430.9 738.9,433.4 738.6,436.0 738.4,438.5 738.4,441.0 738.6,443.6 738.4,446.1 738.1,448.7 738.1,451.2 737.8,453.8 737.1,456.3 736.8,458.9 737.2,461.4 737.1,464.0 737.4,466.5 738.1,466.5 739.3,464.0 740.0,461.4 739.6,458.9 739.9,456.3 740.6,453.8 740.9,451.2 740.9,448.7 741.2,446.1 741.4,443.6 741.2,441.0 741.2,438.5 741.4,436.0 741.7,433.4 742.6,430.9 742.2,428.3 742.5,425.8 742.6,423.2 743.4,420.7 743.4,418.1 743.4,415.6 743.1,413.0 742.9,410.5"/><polygon points="820.4,381.0 819.1,383.5 819.1,386.0 818.8,388.5 818.6,391.0 818.4,393.5 818.1,396.0 817.8,398.5 817.9,401.0 817.8,403.5 818.1,406.0 817.3,408.5 817.8,411.0 817.0,413.5 817.0,416.0 817.2,418.5 817.0,421.0 816.5,423.5 816.1,426.0 816.2,428.5 816.0,431.0 816.3,433.5 815.5,436.0 815.5,438.5 815.8,441.0 814.9,443.5 815.1,446.0 815.2,448.5 815.0,451.0 814.3,453.5 814.1,456.0 814.3,458.5 815.2,461.0 815.9,461.0 816.4,458.5 816.9,456.0 817.1,453.5 817.8,451.0 818.0,448.5 817.9,446.0 817.7,443.5 818.6,441.0 818.3,438.5 818.3,436.0 819.1,433.5 818.8,431.0 819.0,428.5 818.9,426.0 819.3,423.5 819.8,421.0 820.0,418.5 819.8,416.0 819.8,413.5 820.6,411.0 820.1,408.5 820.9,406.0 820.6,403.5 820.7,401.0 820.6,398.5 820.9,396.0 821.2,393.5 821.4,391.0 821.6,388.5 821.9,386.0 821.3,383.5 821.1,381.0"/><polygon points="849.4,381.0 848.9,383.5 847.8,386.0 848.0,388.5 848.0,391.0 847.4,393.5 847.2,396.0 847.6,398.5 847.1,401.0 846.7,403.5 846.9,406.0 846.4,408.5 846.2,411.0 845.8,413.5 846.3,416.0 846.2,418.5 845.9,421.0 845.9,423.5 845.0,426.0 845.1,428.5 845.1,431.0 845.3,433.5 845.1,436.0 844.5,438.5 844.3,441.0 844.2,443.5 844.1,446.0 844.3,448.5 843.6,451.0 843.9,453.5 843.7,456.0 843.9,458.5 844.2,461.0 844.9,461.0 846.0,458.5 846.5,456.0 846.7,453.5 846.4,451.0 847.1,448.5 846.9,446.0 847.0,443.5 847.1,441.0 847.3,438.5 847.9,436.0 848.1,433.5 847.9,431.0 847.9,428.5 847.8,426.0 848.7,423.5 848.7,421.0 849.0,418.5 849.1,416.0 848.6,413.5 849.0,411.0 849.2,408.5 849.7,406.0 849.5,403.5 849.9,401.0 850.4,398.5 850.0,396.0 850.2,393.5 850.8,391.0 850.8,388.5 850.6,386.0 851.0,383.5 850.1,381.0"/><polygon points="854.4,412.2 853.7,414.7 853.1,417.2 852.7,419.7 852.5,422.3 852.4,424.8 852.9,427.3 853.2,429.8 853.9,429.8 855.0,427.3 855.2,424.8 855.3,422.3 855.5,419.7 855.9,417.2 855.8,414.7 855.1,412.2"/><polygon points="861.4,411.3 860.2,413.9 859.8,416.5 860.1,419.1 859.5,421.7 859.2,424.3 859.0,426.9 859.2,429.5 858.9,432.0 859.6,434.6 859.8,437.2 860.5,437.2 861.7,434.6 861.7,432.0 862.0,429.5 861.8,426.9 862.0,424.3 862.3,421.7 862.9,419.1 862.6,416.5 862.3,413.9 862.1,411.3"/><polygon points="869.4,395.8 868.8,398.5 868.4,401.3 867.7,404.0 867.3,406.8 867.2,409.6 867.6,412.3 868.2,415.1 868.9,415.1 869.8,412.3 870.0,409.6 870.1,406.8 870.5,404.0 871.2,401.3 871.0,398.5 870.1,395.8"/><polygon points="867.5,426.1 866.8,428.6 866.1,431.2 865.7,433.7 865.7,436.2 865.7,438.7 865.9,441.3 866.3,443.8 867.0,443.8 868.0,441.3 868.5,438.7 868.5,436.2 868.5,433.7 868.9,431.2 868.9,428.6 868.2,426.1"/><polygon points="876.9,389.2 876.2,391.8 875.7,394.4 875.4,397.0 874.8,399.6 875.2,402.1 874.6,404.7 874.7,407.3 874.4,409.9 874.8,412.5 875.2,415.1 875.9,415.1 877.0,412.5 877.2,409.9 877.5,407.3 877.4,404.7 878.0,402.1 877.6,399.6 878.2,397.0 878.5,394.4 878.3,391.8 877.6,389.2"/><polygon points="874.1,431.8 873.0,434.3 872.5,436.8 872.4,439.3 872.1,441.8 872.5,444.3 872.1,446.9 871.8,449.4 871.7,451.9 872.0,454.4 871.8,456.9 872.3,459.4 873.0,459.4 873.9,456.9 874.8,454.4 874.5,451.9 874.6,449.4 874.9,446.9 875.3,444.3 874.9,441.8 875.2,439.3 875.3,436.8 875.1,434.3 874.8,431.8"/><polygon points="896.9,395.8 895.8,398.3 895.8,400.8 895.5,403.3 895.6,405.8 894.7,408.3 894.9,410.9 895.3,413.4 895.6,415.9 896.3,415.9 897.5,413.4 897.7,410.9 897.5,408.3 898.4,405.8 898.3,403.3 898.6,400.8 898.0,398.3 897.6,395.8"/><polygon points="904.4,389.2 903.8,391.7 903.3,394.2 902.4,396.8 902.5,399.3 902.2,401.8 902.1,404.3 902.9,406.8 903.1,409.3 903.8,409.3 905.0,406.8 904.9,404.3 905.0,401.8 905.3,399.3 905.2,396.8 906.1,394.2 905.9,391.7 905.1,389.2"/><polygon points="911.9,381.0 911.1,383.5 910.9,386.0 910.2,388.5 910.5,391.0 910.0,393.5 909.7,396.0 909.9,398.5 909.9,401.0 909.1,403.5 909.3,406.0 909.2,408.5 908.7,411.0 908.6,413.5 908.3,416.0 908.2,418.5 908.1,421.0 908.2,423.5 908.0,426.0 907.5,428.5 907.2,431.0 907.3,433.5 907.4,436.0 906.9,438.5 906.8,441.0 906.6,443.5 906.9,446.0 906.5,448.5 906.0,451.0 905.8,453.5 905.9,456.0 906.2,458.5 906.7,461.0 907.4,461.0 908.3,458.5 908.7,456.0 908.6,453.5 908.8,451.0 909.3,448.5 909.7,446.0 909.4,443.5 909.6,441.0 909.7,438.5 910.2,436.0 910.1,433.5 910.0,431.0 910.3,428.5 910.8,426.0 911.0,423.5 910.9,421.0 911.0,418.5 911.1,416.0 911.4,413.5 911.5,411.0 912.0,408.5 912.1,406.0 911.9,403.5 912.7,401.0 912.7,398.5 912.5,396.0 912.8,393.5 913.3,391.0 913.0,388.5 913.7,386.0 913.2,383.5 912.6,381.0"/><polygon points="933.3,381.0 932.5,383.5 931.6,386.0 931.5,388.5 931.7,391.0 931.4,393.5 931.1,396.0 931.0,398.5 931.3,401.0 930.6,403.5 930.7,406.0 930.3,408.5 930.2,411.0 930.4,413.5 930.4,416.0 929.7,418.5 929.4,421.0 929.7,423.5 929.1,426.0 928.8,428.5 929.3,431.0 928.8,433.5 928.9,436.0 928.4,438.5 928.7,441.0 928.2,443.5 927.8,446.0 927.5,448.5 927.8,451.0 927.7,453.5 927.7,456.0 927.2,458.5 928.1,461.0 928.8,461.0 929.4,458.5 930.5,456.0 930.5,453.5 930.6,451.0 930.3,448.5 930.6,446.0 931.0,443.5 931.5,441.0 931.2,438.5 931.7,436.0 931.6,433.5 932.1,431.0 931.6,428.5 931.9,426.0 932.5,423.5 932.2,421.0 932.5,418.5 933.2,416.0 933.2,413.5 933.0,411.0 933.1,408.5 933.5,406.0 933.4,403.5 934.1,401.0 933.8,398.5 933.9,396.0 934.2,393.5 934.5,391.0 934.3,388.5 934.4,386.0 934.6,383.5 934.0,381.0"/><polygon points="938.6,411.3 937.8,414.1 937.1,416.9 937.0,419.6 936.6,422.4 936.5,425.1 936.8,427.9 937.4,430.7 938.1,430.7 939.0,427.9 939.3,425.1 939.4,422.4 939.8,419.6 939.9,416.9 940.0,414.1 939.3,411.3"/><polygon points="945.4,411.3 944.8,414.1 943.7,416.9 943.8,419.6 943.9,422.4 943.9,425.1 943.3,427.9 944.2,430.7 944.9,430.7 945.6,427.9 946.7,425.1 946.7,422.4 946.6,419.6 946.5,416.9 947.1,414.1 946.1,411.3"/><polygon points="952.4,411.3 951.2,414.1 951.4,416.9 951.2,419.6 950.6,422.4 950.1,425.1 950.9,427.9 951.2,430.7 951.9,430.7 953.2,427.9 952.9,425.1 953.4,422.4 954.0,419.6 954.2,416.9 953.4,414.1 953.1,411.3"/><polygon points="961.7,381.0 960.7,383.5 960.6,386.0 960.2,388.5 960.2,391.0 959.6,393.5 959.9,396.0 959.3,398.5 959.3,401.0 959.5,403.5 959.3,406.0 958.6,408.5 958.5,411.0 958.5,413.5 958.4,416.0 958.1,418.5 957.7,421.0 957.7,423.5 957.9,426.0 957.9,428.5 957.0,431.0 957.3,433.5 957.3,436.0 956.5,438.5 957.0,441.0 956.3,443.5 956.5,446.0 956.3,448.5 956.2,451.0 955.8,453.5 955.7,456.0 956.0,458.5 956.5,461.0 957.2,461.0 958.1,458.5 958.5,456.0 958.6,453.5 959.0,451.0 959.1,448.5 959.3,446.0 959.1,443.5 959.8,441.0 959.3,438.5 960.1,436.0 960.1,433.5 959.8,431.0 960.7,428.5 960.7,426.0 960.5,423.5 960.5,421.0 960.9,418.5 961.2,416.0 961.3,413.5 961.3,411.0 961.4,408.5 962.1,406.0 962.3,403.5 962.1,401.0 962.1,398.5 962.7,396.0 962.4,393.5 963.0,391.0 963.0,388.5 963.4,386.0 962.8,383.5 962.4,381.0"/><polygon points="975.9,381.0 975.0,383.5 974.6,386.0 974.3,388.5 974.1,391.0 973.6,393.5 974.0,396.0 973.7,398.5 973.3,401.0 973.6,403.5 973.4,406.0 973.0,408.5 972.6,411.0 972.7,413.5 972.3,416.0 972.1,418.5 972.2,421.0 971.8,423.5 971.9,426.0 971.8,428.5 971.2,431.0 971.6,433.5 970.9,436.0 971.3,438.5 971.2,441.0 970.8,443.5 970.3,446.0 970.5,448.5 970.2,451.0 970.5,453.5 969.7,456.0 970.5,458.5 970.7,461.0 971.4,461.0 972.6,458.5 972.5,456.0 973.3,453.5 973.0,451.0 973.3,448.5 973.1,446.0 973.6,443.5 974.0,441.0 974.1,438.5 973.7,436.0 974.4,433.5 974.0,431.0 974.6,428.5 974.7,426.0 974.6,423.5 975.0,421.0 974.9,418.5 975.1,416.0 975.5,413.5 975.4,411.0 975.8,408.5 976.2,406.0 976.4,403.5 976.1,401.0 976.5,398.5 976.8,396.0 976.4,393.5 976.9,391.0 977.1,388.5 977.4,386.0 977.1,383.5 976.6,381.0"/><polygon points="982.6,381.0 982.1,383.5 981.4,386.0 981.3,388.6 980.6,391.1 981.1,393.6 980.6,396.1 981.1,398.6 981.3,401.1 982.0,401.1 983.2,398.6 983.4,396.1 983.9,393.6 983.4,391.1 984.1,388.6 984.2,386.0 984.2,383.5 983.3,381.0"/><polygon points="978.7,440.9 978.2,443.4 977.1,445.9 977.4,448.4 977.4,450.9 976.5,453.4 976.6,456.0 977.1,458.5 977.4,461.0 978.1,461.0 979.2,458.5 979.4,456.0 979.3,453.4 980.2,450.9 980.2,448.4 979.9,445.9 980.3,443.4 979.4,440.9"/><polygon points="989.7,381.0 988.5,383.5 988.6,386.0 988.0,388.6 988.2,391.1 987.5,393.6 987.7,396.1 988.2,398.6 988.4,401.1 989.1,401.1 990.3,398.6 990.5,396.1 990.3,393.6 991.0,391.1 990.8,388.6 991.4,386.0 990.7,383.5 990.4,381.0"/><polygon points="985.8,440.9 984.7,443.4 984.3,445.9 984.3,448.4 984.0,450.9 983.6,453.4 983.5,456.0 983.7,458.5 984.5,461.0 985.2,461.0 985.8,458.5 986.3,456.0 986.4,453.4 986.8,450.9 987.1,448.4 987.1,445.9 986.8,443.4 986.5,440.9"/><polygon points="996.4,381.0 995.9,383.5 995.2,386.0 995.2,388.6 994.4,391.1 994.7,393.6 994.1,396.1 994.6,398.6 995.1,401.1 995.8,401.1 996.7,398.6 996.9,396.1 997.5,393.6 997.2,391.1 998.0,388.6 998.0,386.0 998.0,383.5 997.1,381.0"/><polygon points="994.4,412.2 993.6,414.7 992.9,417.2 993.1,419.7 992.7,422.3 992.6,424.8 993.0,427.3 993.2,429.8 993.9,429.8 995.1,427.3 995.4,424.8 995.5,422.3 995.9,419.7 995.7,417.2 995.7,414.7 995.1,412.2"/><polygon points="992.5,440.9 991.3,443.4 991.5,445.9 991.1,448.4 990.7,450.9 990.9,453.4 990.3,456.0 991.1,458.5 991.2,461.0 991.9,461.0 993.2,458.5 993.1,456.0 993.7,453.4 993.5,450.9 993.9,448.4 994.3,445.9 993.4,443.4 993.2,440.9"/><polygon points="1003.6,381.0 1002.8,383.5 1002.1,386.0 1002.3,388.6 1001.8,391.1 1001.5,393.6 1001.8,396.1 1001.4,398.6 1002.3,401.1 1003.0,401.1 1003.5,398.6 1004.6,396.1 1004.3,393.6 1004.6,391.1 1005.1,388.6 1004.9,386.0 1004.9,383.5 1004.3,381.0"/><polygon points="1001.6,412.2 1000.9,414.7 1000.0,417.3 1000.1,419.9 1000.2,422.4 999.8,425.0 999.7,427.6 999.2,430.2 998.8,432.7 998.7,435.3 998.6,437.9 998.8,440.4 998.5,443.0 998.4,445.6 998.5,448.1 997.7,450.7 997.6,453.3 997.8,455.9 997.5,458.4 998.4,461.0 999.1,461.0 999.6,458.4 1000.6,455.9 1000.4,453.3 1000.5,450.7 1001.3,448.1 1001.2,445.6 1001.3,443.0 1001.6,440.4 1001.4,437.9 1001.5,435.3 1001.6,432.7 1002.0,430.2 1002.5,427.6 1002.6,425.0 1003.0,422.4 1002.9,419.9 1002.8,417.3 1003.1,414.7 1002.3,412.2"/><polygon points="1032.1,381.0 1030.8,383.5 1030.6,386.0 1030.2,388.5 1030.3,391.0 1030.0,393.5 1030.1,396.0 1030.0,398.5 1029.5,401.0 1029.7,403.5 1029.4,406.0 1029.0,408.5 1029.4,411.0 1028.7,413.5 1028.5,416.0 1028.3,418.5 1028.6,421.0 1028.6,423.5 1028.4,426.0 1027.9,428.5 1027.6,431.0 1027.3,433.5 1027.6,436.0 1027.4,438.5 1027.0,441.0 1027.1,443.5 1026.8,446.0 1027.0,448.5 1026.7,451.0 1026.1,453.5 1026.5,456.0 1026.0,458.5 1026.9,461.0 1027.6,461.0 1028.1,458.5 1029.3,456.0 1028.9,453.5 1029.5,451.0 1029.8,448.5 1029.6,446.0 1029.9,443.5 1029.8,441.0 1030.2,438.5 1030.4,436.0 1030.1,433.5 1030.4,431.0 1030.7,428.5 1031.2,426.0 1031.4,423.5 1031.4,421.0 1031.1,418.5 1031.3,416.0 1031.5,413.5 1032.2,411.0 1031.8,408.5 1032.2,406.0 1032.5,403.5 1032.3,401.0 1032.8,398.5 1032.9,396.0 1032.8,393.5 1033.1,391.0 1033.0,388.5 1033.4,386.0 1032.9,383.5 1032.8,381.0"/></g>
</g>
</svg>
<div class="tl" style="left:29.5px">07:05:50</div><div class="tl" style="left:125.5px">07:06:40</div><div class="tl" style="left:221.5px">07:07:30</div><div class="tl" style="left:317.4px">07:08:20</div><div class="tl" style="left:413.4px">07:09:10</div><div class="tl" style="left:509.4px">07:10:00</div><div class="tl" style="left:605.4px">07:10:50</div><div class="tl" style="left:701.4px">07:11:40</div><div class="tl" style="left:797.3px">07:12:30</div><div class="tl" style="left:893.3px">07:13:20</div><div class="tl" style="left:989.3px">07:14:10</div>

<!-- scale -->
<div class="a" style="left:1044px;top:65px;width:88px;height:540px;background:#ebebeb;border-top:1px solid #202020;border-right:2px solid #202428;border-bottom:2px solid #202428"></div>
<div class="tk" style="top:93.4px"></div><div class="fq" style="top:82.3px">476220</div><div class="tk" style="top:125.0px"></div><div class="fq" style="top:113.9px">476210</div><div class="tk" style="top:156.5px"></div><div class="fq" style="top:145.4px">476200</div><div class="tk" style="top:188.1px"></div><div class="fq" style="top:177.0px">476190</div><div class="tk" style="top:219.7px"></div><div class="fq" style="top:208.6px">476180</div><div class="tk" style="top:251.2px"></div><div class="fq" style="top:240.2px">476170</div><div class="tk" style="top:282.8px"></div><div class="fq" style="top:271.7px">476160</div><div class="tk" style="top:314.4px"></div><div class="fq" style="top:303.3px">476150</div><div class="tk" style="top:346.0px"></div><div class="fq" style="top:334.9px">476140</div><div class="tk" style="top:377.5px"></div><div class="fq" style="top:366.4px">476130</div><div class="tk" style="top:409.1px"></div><div class="fq" style="top:398.0px">476120</div><div class="tk" style="top:440.7px"></div><div class="fq" style="top:429.6px">476110</div><div class="tk" style="top:472.2px"></div><div class="fq" style="top:461.1px">476100</div><div class="tk" style="top:503.8px"></div><div class="fq" style="top:492.7px">476090</div><div class="tk" style="top:535.4px"></div><div class="fq" style="top:524.3px">476080</div><div class="tk" style="top:566.9px"></div><div class="fq" style="top:555.8px">476070</div><div class="tk" style="top:598.5px"></div><div class="fq" style="top:587.4px">476060</div>
<!-- right slider -->
<div class="a" style="left:1137px;top:75px;width:5px;height:523px;background:linear-gradient(90deg,#2f5a70,#3a8070 30%,#8ab8bc 70%,#7aacb4)"></div>
<div class="a" style="left:1136px;top:597px;width:6px;height:2px;background:#cce6ec"></div>
<div class="a" style="left:1131px;top:238px;width:17px;height:15px;background:#c4c4c4;border-bottom:1px solid #404040;border-right:1px solid #606060"></div>

<!-- bottom panel -->
<div class="a" style="left:3px;top:611px;width:138px;height:34px;border:2px solid #9cbcd8"></div>
<div class="a wt" style="left:6px;top:613px;font-size:13px;color:#d0d5dc;transform:scaleX(0.94);transform-origin:left">Visual Gain</div>
<div class="a wt" style="left:7px;top:627px;font-size:13px;color:#d0d5dc">Agc</div>
<div class="a" style="left:36px;top:627px;width:13px;height:13px;border-radius:50%;background:#f0f0f0"></div>
<div class="a wt" style="left:60px;top:627px;font-size:13px;color:#d0d5dc">Lo</div>
<div class="a" style="left:78px;top:627px;width:13px;height:13px;border-radius:50%;background:#303030;border:2px solid #f0f0f0"></div>
<div class="a wt" style="left:101px;top:627px;font-size:13px;color:#d0d5dc">Hi</div>
<div class="a" style="left:118px;top:627px;width:13px;height:13px;border-radius:50%;background:#f0f0f0"></div>

<div class="a" style="left:154px;top:611px;width:237px;height:16px;background:#2a3a52;border:1px solid #5c7088"></div>
<div class="a" style="left:155px;top:612px;width:139px;height:14px;background:linear-gradient(#8cb0de,#88a4c0 40%,#94a2a6 83%,#3a7c7a 83%,#3a7c7a)"></div>
<div class="a" style="left:154px;top:611px;width:237px;text-align:center;font-size:14px;line-height:14px;color:#e4ecf4;transform:scaleX(0.94)">57/100</div>
<div class="a" style="left:154px;top:631px;width:237px;height:16px;background:#2a3a52;border:1px solid #5c7088"></div>
<div class="a" style="left:155px;top:632px;width:123px;height:14px;background:linear-gradient(#8cb0de,#88a4c0 40%,#94a2a6 83%,#3a7c7a 83%,#3a7c7a)"></div>
<div class="a" style="left:154px;top:631px;width:237px;text-align:center;font-size:14px;line-height:14px;color:#e4ecf4;transform:scaleX(0.94)">52/100</div>
<div class="a wt" style="left:405px;top:611px;font-size:12px;color:#d0d5dc">Sensitivity</div>
<div class="a wt" style="left:405px;top:632.5px;font-size:12px;color:#d0d5dc">Contrast</div>

<div class="a" style="left:563px;top:610px;width:18px;height:18px;border-radius:50%;background:#18d020;border:1px solid #104010"></div><svg class="a" style="left:563px;top:610px" width="18" height="18"><path d="M8.5 4.5 A5 5.5 0 0 0 8.5 13.5" fill="none" stroke="#e8ffe8" stroke-width="1.3"/></svg>
<div class="a" style="left:533px;top:629px;font-size:13px;font-weight:bold;color:#e8eef4;text-shadow:1px 1px 0 #1c2838;letter-spacing:0.2px">Capture ON</div>
<div class="a wt" style="left:702px;top:630.5px;font-size:13px;color:#d0d5dc">Ticks&nbsp;&nbsp;: 50 seconds</div>
<div class="a wt" style="left:840px;top:630.5px;font-size:12px;letter-spacing:0.1px;color:#d0d5dc">FFT bin size = 366.21 mHz</div>

<div class="a" style="left:1018px;top:621px;width:58px;height:21px;background:#dce6f4;border:2px solid #3c98e0;font-size:12px;line-height:18px;text-align:center;color:#202020">Start</div>
<div class="a" style="left:1082px;top:621px;width:59px;height:22px;background:#d6d5d5;border:1px solid #dcdcdc;font-size:12px;line-height:20px;text-align:center;color:#202020">Exit</div>
<div class="a" style="left:0;top:648px;width:1151px;height:2px;background:#38495a"></div><div class="a" style="left:0;top:650px;width:1151px;height:2px;background:#c4ccd0"></div>
</body></html>
